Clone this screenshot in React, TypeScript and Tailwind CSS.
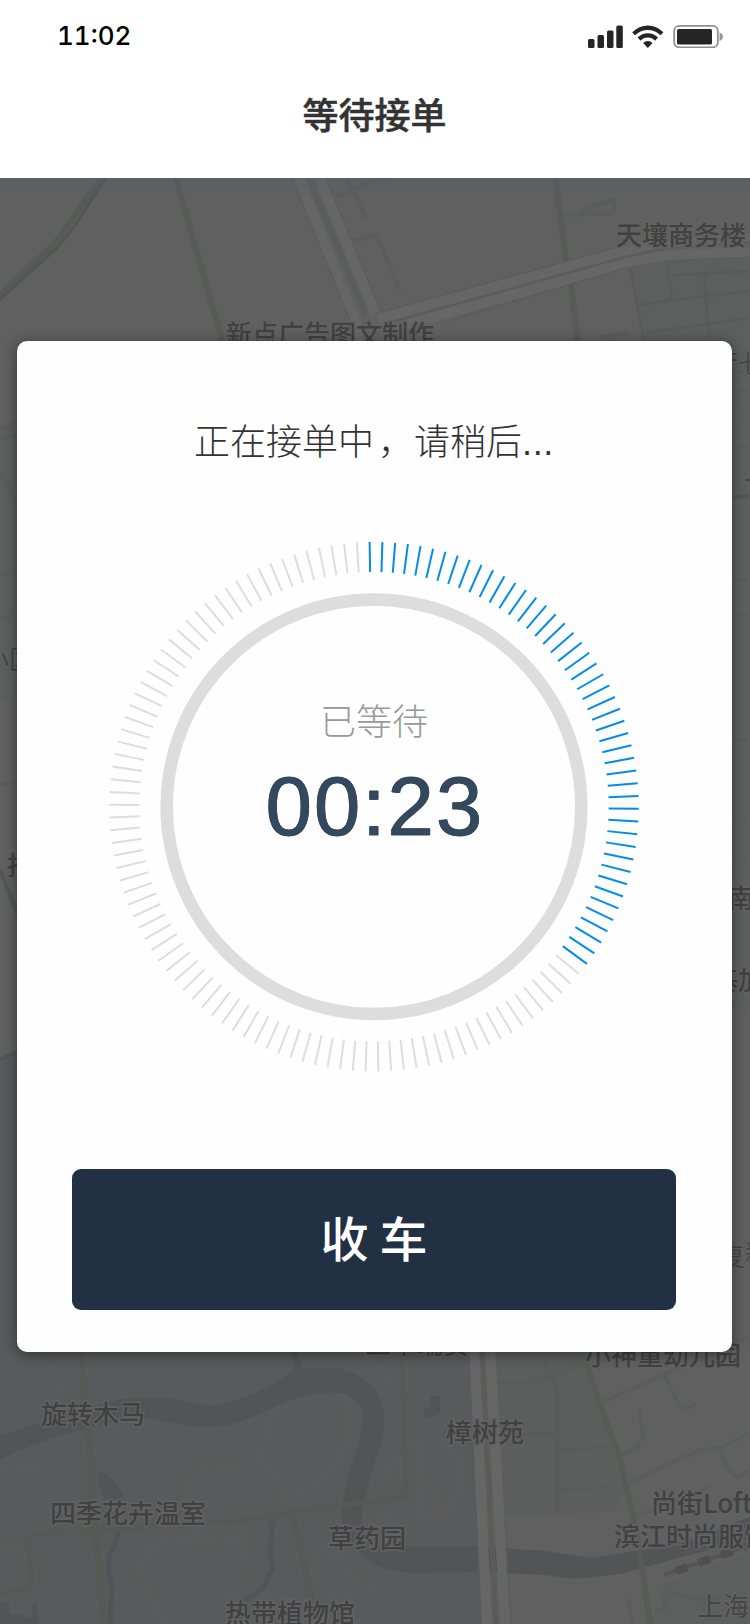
import React from "react";

type Label = { text: string; x: number; y: number; faint?: boolean };

const labels: Label[] = [
  { text: "天壤商务楼", x: 616, y: 245 },
  { text: "新点广告图文制作", x: 226, y: 344 },
  { text: "厅七", x: 712, y: 374, faint: true },
  { text: "一", x: 744, y: 490, faint: true },
  { text: "小区", x: -17, y: 669, faint: true },
  { text: "找", x: 7, y: 875 },
  { text: "南", x: 728, y: 908 },
  { text: "基加", x: 712, y: 990 },
  { text: "复", x: 719, y: 1266, faint: true },
  { text: "新", x: 745, y: 1262, faint: true },
  { text: "三千瑞安", x: 365, y: 1354 },
  { text: "小神童幼儿园", x: 585, y: 1365 },
  { text: "旋转木马", x: 41, y: 1424 },
  { text: "樟树苑", x: 446, y: 1442 },
  { text: "四季花卉温室", x: 50, y: 1523 },
  { text: "尚街Loft", x: 651, y: 1513 },
  { text: "草药园", x: 328, y: 1548 },
  { text: "滨江时尚服饰", x: 614, y: 1546 },
  { text: "热带植物馆", x: 225, y: 1623 },
  { text: "上海", x: 697, y: 1616, faint: true },
];

function CityMap() {
  return (
    <svg className="absolute inset-0 h-full w-full" viewBox="0 178 750 1446" fill="none">
      <rect x="0" y="178" width="750" height="1446" fill="#606060" />

      {/* city blocks */}
      <path d="M632 270L667 262L750 258V500L680 500Z" fill="#5c5f5e" />
      <path d="M700 500H750V1010H700Z" fill="#5d5f5e" />
      <path d="M0 430L20 420V700H0Z" fill="#5d5f5e" />
      <path d="M497 1345H585L610 1435L622 1490Q622 1510 606 1512L507 1517Z" fill="#5b5e5c" />
      <path d="M658 1624L662 1584L750 1553V1624Z" fill="#5c5f5e" />

      {/* park */}
      <path d="M0 1058L30 1050V1340H470L482 1624H0Z" fill="#575b5c" />

      {/* river */}
      <path
        d="M0 1436L30 1426Q100 1402 130 1398L165 1398L210 1406Q235 1403 270 1386L297 1368H335Q357 1371 375 1389Q386 1404 384 1430Q382 1446 374 1463L362 1508V1520Q364 1542 375 1546H475L500 1548L545 1551L592 1558L635 1551L690 1540L750 1517V1540L690 1555L620 1574L575 1579L545 1575L480 1572L412 1573Q372 1570 360 1552Q342 1531 341 1512L348 1475Q362 1440 363 1415Q360 1400 345 1394Q320 1388 285 1402L250 1418Q228 1427 210 1427Q190 1428 150 1418Q120 1420 90 1427Q30 1443 0 1460Z"
        fill="#515556"
      />
      <g fill="#515556">
        <path d="M290 1352H297L303 1367L294 1370Q296 1362 290 1352Z" />
        <path d="M97 1473Q105 1471 109 1477Q125 1490 123 1500H105Q99 1490 97 1473Z" />
        <circle cx="272" cy="1523" r="4" />
        <path d="M430 1396H442L439 1402L441 1413L436 1415L433 1418L427 1417Q421 1412 425 1408L431 1407Z" />
        <path d="M0 1604L8 1601L10 1613L32 1618V1604H37L39 1624H0Z" />
      </g>
      <g stroke="#515556" strokeWidth="5">
        <path d="M118 1530Q117 1542 109 1557Q107 1570 112 1588L110 1624" />
        <path d="M272 1526L270 1555L273 1568L263 1588L243 1602L240 1624" />
      </g>

      {/* footpaths through the park */}
      <g stroke="#5c5b59" strokeWidth="3">
        <path d="M51 1352L56 1380L60 1395" />
        <path d="M0 1468L15 1467H40" />
        <path d="M190 1500V1476L197 1471L240 1469" />
        <path d="M288 1505L275 1468L262 1463Q257 1457 265 1442L265 1418L300 1400Q330 1394 345 1403Q353 1411 350 1430L342 1454L318 1482L290 1500" />
        <path d="M193 1524V1539" />
        <path d="M170 1624Q144 1600 142 1570Q141 1548 165 1541L228 1539Q242 1543 247 1556L249 1585M243 1524V1548" />
        <path d="M0 1552L28 1548" />
        <path d="M317 1600Q306 1552 325 1551Q341 1553 353 1578L368 1585L378 1600" />
        <path d="M365 1352L397 1386M405 1441L445 1439L456 1456Q462 1480 456 1498L442 1517L405 1521L383 1519L384 1480L400 1450M420 1441V1518M407 1482H425Q436 1487 434 1500L442 1515" />
      </g>

      {/* secondary roads */}
      <g stroke="#575954" strokeWidth="6">
        <path d="M80 1350L88 1430L94 1510L97 1550L104 1624" />
        <path d="M191 1524L240 1521L300 1511L375 1501L407 1496M401 1350L407 1500" strokeWidth="5" />
        <path d="M190 1524L95 1531L29 1534V1552L32 1577Q31 1590 24 1590L0 1593" strokeWidth="5" />
        <path d="M292 1511L312 1600" />
      </g>
      <g stroke="#575a56" strokeWidth="6">
        <path d="M103 176L55 243L-2 297" />
        <path d="M107 176L76 224L58 247L-2 301" stroke="#525655" strokeWidth="3" />
        <path d="M175 176L225 350" />
        <path d="M555 176L566 260M571 284L578 345" />
        <path d="M586 1363L600 1405L618 1453L635 1525L643 1575L650 1624" />
      </g>

      {/* side streets */}
      <g stroke="#5a5d5c" strokeWidth="4">
        <path d="M376 233L400 291M346 178L366 218M335 197L385 176M350 242L375 235M375 181L390 178" />
        <path d="M564 215L614 213V200L590 207L579 213" />
        <path d="M630 268L645 345M667 262L672 300L750 291M704 272L710 345M674 275L750 271M640 305L672 300M645 333L750 318M600 337L628 333" stroke="#585b5a" strokeWidth="3" />
        <path d="M600 1403L750 1337M664 1374L678 1403Q685 1412 696 1403M640 1410L643 1435Q640 1448 620 1456M626 1484L700 1450L720 1448L750 1433M720 1448Q722 1465 736 1477L750 1471M635 1517L710 1487" />
        <path d="M540 1353L557 1390V1512M497 1382L520 1384L550 1377L585 1362M522 1434H557M560 1450L615 1447M560 1490L610 1487" stroke="#595c5a" />
        <path d="M628 1599L632 1624M655 1612L664 1609L668 1592L690 1598L720 1600" />
        <path d="M720 372H750M720 391H750M720 416H750M720 447H750M720 580H750M720 615H750M720 672H750M720 740H750M720 818H750M720 862H750" stroke="#595c5b" strokeWidth="2" />
        <path d="M720 499L750 496" stroke="#545754" />
        <path d="M0 429L20 421M0 440L20 434M0 472L20 510M0 575L20 572M0 618L20 614M0 785L20 780" strokeWidth="3" />
        <path d="M0 870L20 920M0 1060L20 1050" stroke="#535754" />
      </g>

      {/* main roads */}
      <path d="M294 178H326L382 311L622 247L670 241L750 237V257L665 261L625 268L420 328L390 345H365Z" fill="#616161" />
      <g stroke="#666666" strokeWidth="10">
        <path d="M298 176L356 322L360 345M319 176L375 313" />
        <path d="M378 319L621 252L660 245L750 239" />
        <path d="M390 329L623 264L664 256L750 252" />
        <path d="M474 1350L487 1624M490 1350L505 1624" />
      </g>
      <g stroke="#595c5b" strokeWidth="1">
        <path d="M292 178L350 320M326 178L381 312L618 247M442 323L625 268L665 261L750 257M469 1352L481 1624M497 1352L511 1624" />
      </g>
      <path d="M308 176L366 315" stroke="#5b5d5c" strokeWidth="6" />
      <path d="M392 322L621 258L655 250L750 242" stroke="#5a5d5b" strokeWidth="2" />
      <path d="M482 1350L496 1624" stroke="#5b5c5a" strokeWidth="5" />
      <path d="M0 1050L20 1045" stroke="#606161" strokeWidth="4" />

      {/* railway */}
      <path d="M664 1575L750 1545" stroke="#555555" strokeWidth="4" />
      <path d="M676 1571L750 1545" stroke="#4f4f4f" strokeWidth="8" strokeDasharray="12 12" />

      {/* place names */}
      <g
        fontFamily="'Noto Sans CJK SC', sans-serif"
        fontSize="26"
        stroke="#626262"
        strokeWidth="3"
        strokeLinejoin="round"
        paintOrder="stroke"
      >
        {labels.map((l) => (
          <text key={l.text} x={l.x} y={l.y} fill={l.faint ? "#464646" : "#414141"} fontWeight={l.faint ? 400 : 500}>
            {l.text}
          </text>
        ))}
      </g>
    </svg>
  );
}

function StatusIcons() {
  return (
    <svg className="h-6 w-[136px]" viewBox="587 24 136 24" fill="none">
      <g fill="#252525">
        <rect x="588" y="39" width="6.5" height="9" rx="1.5" />
        <rect x="597.5" y="35" width="6.5" height="13" rx="1.5" />
        <rect x="607" y="30.5" width="6.5" height="17.5" rx="1.5" />
        <rect x="616.3" y="25.5" width="6.5" height="22.5" rx="1.5" />
        <path d="M632.2 32.3Q639 25.4 647.8 25.4Q656.8 25.4 663.4 32.3L660.5 35.2Q655 30 647.8 30Q640.7 30 635 35.2Z" />
        <path d="M637.6 37.6Q642 33.2 647.8 33.2Q653.7 33.2 658 37.6L655 40.7Q652 37.5 647.8 37.5Q643.6 37.5 640.6 40.7Z" />
        <path d="M643.2 43Q645.2 41 647.8 41Q650.5 41 652.5 43L647.8 48Z" />
        <rect x="677" y="29" width="35" height="15.5" rx="1.5" />
      </g>
      <rect x="674.2" y="25.8" width="43.6" height="21.6" rx="5" stroke="#8e8e93" strokeWidth="1.8" />
      <path d="M719.5 32.5Q723 34 723 36.7Q723 39.5 719.5 41Z" fill="#96969a" />
    </svg>
  );
}

const TICKS = 130;
const ACTIVE = 47;

function Dial() {
  return (
    <div className="relative mt-[73px] flex h-[530px] w-[530px] flex-col items-center">
      <svg className="absolute inset-0 h-full w-full" viewBox="-265 -264.7 530 530" fill="none">
        <circle r="207.3" stroke="#dddddd" strokeWidth="12.5" />
        {Array.from({ length: TICKS }, (_, i) => (
          <line
            key={i}
            y1="-264.7"
            y2="-234.7"
            stroke={i < ACTIVE ? "#058ce6" : "#dddddd"}
            strokeWidth="2"
            transform={`rotate(${(i * 360) / TICKS - 0.95})`}
          />
        ))}
      </svg>
      <p className="relative mt-[151px] text-[36px] leading-[52px] font-light text-[#999999]">已等待</p>
      <p className="relative mt-[15px] pl-[2px] font-['Liberation_Sans',sans-serif] text-[83px] leading-[94px] tracking-[2.2px] text-[#34495e] [-webkit-text-stroke:0.8px_#34495e] [text-shadow:0.6px_0_#34495e,-0.6px_0_#34495e]">
        00:23
      </p>
    </div>
  );
}

export default function App() {
  return (
    <div className="flex h-[1624px] w-[750px] flex-col overflow-hidden bg-white font-['Noto_Sans_CJK_SC',sans-serif]">
      <header className="flex h-[178px] shrink-0 flex-col">
        <div className="flex h-[72px] items-center justify-between pr-[27px] pl-[57px]">
          <span className="font-['Inter',sans-serif] text-[26px] leading-none font-medium text-black tabular-nums">11:02</span>
          <StatusIcons />
        </div>
        <h1 className="mt-[15px] pr-px text-center text-[36px] leading-[52px] font-medium text-[#333333] [-webkit-text-stroke:0.5px_#333333]">
          等待接单
        </h1>
      </header>
      <main className="relative flex grow flex-col items-start pt-[163px] pl-[17px]">
        <CityMap />
        <div className="absolute inset-x-0 top-0 h-6 bg-linear-to-b from-[#50606c]/40 to-transparent" />
        <section className="relative flex h-[1011px] w-[715px] flex-col items-center rounded-[10px] bg-[#fefefe] pr-px shadow-[0_2px_14px_rgba(0,0,0,0.45)]">
          <p className="mt-[72px] text-[36px] leading-[52px] font-light text-[#333333]">
            正在接单中<span className="ml-1">，</span>请稍后
            <span className="font-['Liberation_Sans',sans-serif] tracking-[0.7px]">...</span>
          </p>
          <Dial />
          <button className="mt-[97px] h-[141px] w-[604px] rounded-[9px] bg-[#213143] pb-[7px] text-[48px] font-medium text-white">收 车</button>
        </section>
      </main>
    </div>
  );
}
